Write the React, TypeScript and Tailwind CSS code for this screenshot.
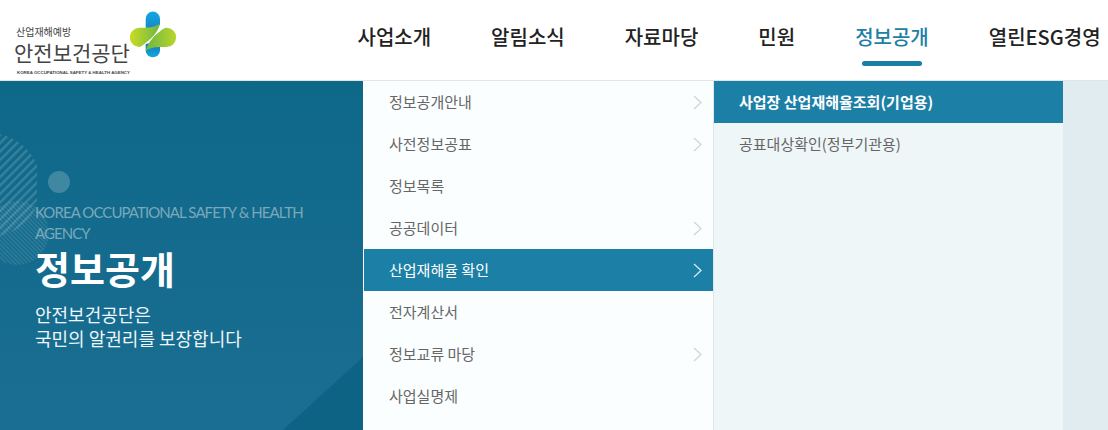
import React from 'react';

const nav = ['사업소개', '알림소식', '자료마당', '민원', '정보공개', '열린ESG경영'];

const menu = [
  { label: '정보공개안내', arrow: true },
  { label: '사전정보공표', arrow: true },
  { label: '정보목록', arrow: false },
  { label: '공공데이터', arrow: true },
  { label: '산업재해율 확인', arrow: true, active: true },
  { label: '전자계산서', arrow: false },
  { label: '정보교류 마당', arrow: true },
  { label: '사업실명제', arrow: false },
];

const LogoMark = () => (
  <svg width="47" height="47" viewBox="0 0 47 47" className="shrink-0">
    <defs>
      <linearGradient id="blueTop" x1="0" y1="0" x2="0" y2="1">
        <stop offset="0" stopColor="#12a8e4" />
        <stop offset="1" stopColor="#1681c4" />
      </linearGradient>
      <linearGradient id="blueBottom" x1="0" y1="0" x2="0" y2="1">
        <stop offset="0" stopColor="#0f6db0" />
        <stop offset="1" stopColor="#14a8e2" />
      </linearGradient>
      <linearGradient id="limeLeft" x1="0" y1="0" x2="1" y2="0">
        <stop offset="0" stopColor="#cbdc22" />
        <stop offset="1" stopColor="#6bb644" />
      </linearGradient>
      <linearGradient id="limeRight" x1="0" y1="0" x2="1" y2="0">
        <stop offset="0" stopColor="#6bb644" />
        <stop offset="1" stopColor="#b9d52c" />
      </linearGradient>
    </defs>
    <path d="M15.7 7.7a7.15 7.15 0 0 1 14.3 0V14L15.7 20z" fill="url(#blueTop)" />
    <path d="M15.7 33L30 30V39.2a7.15 7.15 0 0 1-14.3 0z" fill="url(#blueBottom)" />
    <path d="M9.5 16.7H13C19 16.7 25 16.5 30 12.5C28 22 20 29 13 34C11 35.5 10 36 9.5 36a9.65 9.65 0 0 1 0-19.3z" fill="url(#limeLeft)" />
    <path d="M36.5 16.7a9.65 9.65 0 0 1 0 19.3H32C26 36 20 36.5 15.7 40C18 30 26 23 33 18C34.5 17 36 16.7 36.5 16.7z" fill="url(#limeRight)" />
  </svg>
);

const Chevron = ({ active }: { active?: boolean }) => (
  <svg width="9" height="15" viewBox="0 0 9 15" fill="none" className={active ? 'text-[#d8e8ef]' : 'text-[#d2d5d6]'}>
    <path d="M1 1l7 6.5L1 14" stroke="currentColor" strokeWidth="1.3" />
  </svg>
);

export default function App() {
  return (
    <div className="w-[1108px] h-[430px] overflow-hidden bg-white font-['Noto_Sans_CJK_KR','Noto_Sans',sans-serif]">
      <header className="h-[81px] flex border-b border-[#e2e5e6]">
        <div className="w-[357.5px] pl-[14px] flex shrink-0">
          <div className="pt-[25px] text-[#444] w-[116px]">
            <div className="text-[10px] leading-[14px] pl-[2px]">산업재해예방</div>
            <div className="text-[21px] leading-[24px] mt-[1px] whitespace-nowrap">안전보건공단</div>
            <div className="text-[4.4px] leading-[8px] mt-[5px] pl-[3px] font-bold whitespace-nowrap font-['Liberation_Sans',sans-serif]">KOREA OCCUPATIONAL SAFETY &amp; HEALTH AGENCY</div>
          </div>
          <div className="pt-[11px]">
            <LogoMark />
          </div>
        </div>
        <nav className="flex gap-[60px] text-[20px] font-medium text-[#222] whitespace-nowrap">
          {nav.map((n) => (
            <div key={n} className={n === '정보공개' ? 'relative pt-[22px] text-[#1d7fa6]' : 'pt-[22px]'}>
              {n}
              {n === '정보공개' && <span className="absolute left-[7px] top-[61px] w-[60px] h-[5px] rounded-full bg-[#1b7ea5]" />}
            </div>
          ))}
        </nav>
      </header>
      <main className="flex h-[349px]">
        <section className="relative w-[363px] shrink-0 overflow-hidden bg-[linear-gradient(180deg,#0e6888,#1a6e93)] pl-[35px] pt-[121px]">
          <svg className="absolute left-0 top-[52px]" width="50" height="134" viewBox="0 0 50 134">
            <defs>
              <pattern id="diag" width="6" height="6" patternUnits="userSpaceOnUse" patternTransform="rotate(-45)">
                <rect width="6" height="2.4" fill="#fff" fillOpacity="0.16" />
              </pattern>
              <pattern id="diag2" width="3" height="3" patternUnits="userSpaceOnUse" patternTransform="rotate(45)">
                <rect width="3" height="1.2" fill="#fff" fillOpacity="0.14" />
              </pattern>
            </defs>
            <svg width="37" height="134" viewBox="0 0 37 134">
              <circle cx="-11" cy="52" r="52" fill="url(#diag)" />
            </svg>
            <circle cx="17" cy="100" r="32" fill="url(#diag2)" />
          </svg>
          <span className="absolute left-[48px] top-[90px] w-[22px] h-[22px] rounded-full bg-white/20" />
          <svg className="absolute right-0 bottom-0" width="80" height="73" viewBox="0 0 80 73">
            <path d="M80 0V73H0z" fill="#0d6383" />
          </svg>
          <div className="relative">
            <p className="text-[15px] leading-[21px] text-[#7ba8ba] tracking-[-0.92px] w-[290px] font-['Lato',sans-serif]">KOREA OCCUPATIONAL SAFETY &amp; HEALTH AGENCY</p>
            <h1 className="text-[38px] leading-[50px] font-bold text-white -mt-[1px]">정보공개</h1>
            <p className="text-[18px] leading-[24px] text-[#eef6f9] mt-[9px]">안전보건공단은<br />국민의 알권리를 보장합니다</p>
          </div>
        </section>
        <div className="w-[350px] shrink-0 ml-[1px] bg-[#fbfeff] border-r border-[#dfe5e8]">
          {menu.map((m) => (
            <div key={m.label} className={m.active ? 'h-[42px] flex items-center justify-between pl-[25px] pr-[11px] pt-[1px] bg-[#1c7fa6] text-white text-[15px]' : 'h-[42px] flex items-center justify-between pl-[25px] pr-[11px] pt-[1px] text-[#666] text-[15px]'}>
              <span>{m.label}</span>
              {m.arrow && <Chevron active={m.active} />}
            </div>
          ))}
        </div>
        <div className="w-[349px] shrink-0 bg-[#eef6f8]">
          <div className="h-[42px] flex items-center pl-[25px] pt-[1px] bg-[#1c7fa6] text-white text-[15px] font-bold">사업장 산업재해율조회(기업용)</div>
          <div className="h-[42px] flex items-center pl-[25px] pt-[1px] text-[#666] text-[15px]">공표대상확인(정부기관용)</div>
        </div>
        <div className="flex-1 bg-[#e0ecf0]" />
      </main>
    </div>
  );
}
